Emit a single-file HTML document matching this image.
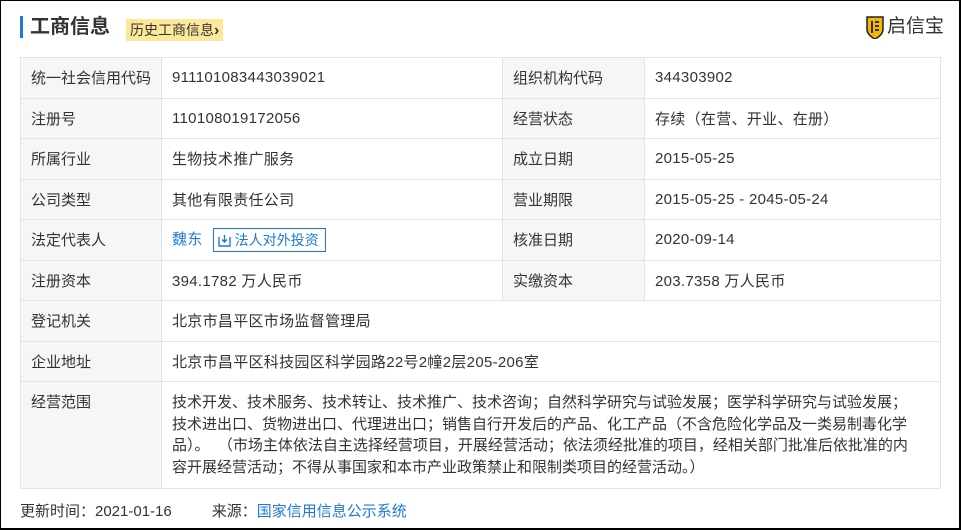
<!DOCTYPE html>
<html><head><meta charset="utf-8"><style>
*{margin:0;padding:0;box-sizing:border-box}
html,body{width:961px;height:530px;overflow:hidden;background:#fff}
body{font-family:"Liberation Sans","Noto Sans CJK SC",sans-serif;color:#333;font-size:15px;position:relative;border:1px solid #000;border-right:2px solid #000;border-bottom:2px solid #000}
.bar{position:absolute;left:19px;top:15px;width:3px;height:22px;background:#1e7ad9}
.title{position:absolute;left:29px;top:11px;font-size:20px;font-weight:bold;color:#333;line-height:30px}
.hist{position:absolute;left:125px;top:18px;height:22px;line-height:22px;padding:0 4px;background:#fde79a;color:#333;font-size:14px}
.logo{position:absolute;left:864px;top:12px;font-size:19px;color:#333;line-height:28px;display:flex;align-items:center;gap:2px}
table{position:absolute;left:19px;top:56px;width:921px;border-collapse:collapse}
td{border:1px solid #e4e4e4;padding:0 10px;height:40.5px;vertical-align:middle;font-size:15px;color:#333;letter-spacing:0.3px}
td.l{background:#f6f6f6;width:141px;letter-spacing:0}
td.v1{width:341px}
td.l2{width:142px}
.tall td{height:107px;vertical-align:top;padding-top:10px;line-height:21.6px;letter-spacing:0}
.tall td.sc{padding-right:26px}
a{color:#1e7ad9;text-decoration:none}
.btn{display:inline-block;border:1px solid #1e7ad9;color:#1e7ad9;height:24px;line-height:22px;padding:0 6px 0 4px;margin-left:10px;font-size:14px;vertical-align:middle;letter-spacing:0}
.foot{position:absolute;left:19px;top:499px;font-size:15px;color:#333}
</style></head><body>
<div class="bar"></div>
<div class="title">工商信息</div>
<div class="hist">历史工商信息<b style="font-size:16px">›</b></div>
<div class="logo"><svg width="20" height="24" viewBox="0 0 20 24"><path d="M2 2h16v12c0 5-4 8-8 10C6 22 2 19 2 14z" fill="#f2b705" stroke="#222" stroke-width="1.5"/><path d="M7 6v12M10 7h4M10 11h4M10 15h4" stroke="#222" stroke-width="1.8"/></svg>启信宝</div>
<table>
<tr><td class="l">统一社会信用代码</td><td class="v1">911101083443039021</td><td class="l l2">组织机构代码</td><td>344303902</td></tr>
<tr><td class="l">注册号</td><td>110108019172056</td><td class="l">经营状态</td><td>存续（在营、开业、在册）</td></tr>
<tr><td class="l">所属行业</td><td>生物技术推广服务</td><td class="l">成立日期</td><td>2015-05-25</td></tr>
<tr><td class="l">公司类型</td><td>其他有限责任公司</td><td class="l">营业期限</td><td>2015-05-25 - 2045-05-24</td></tr>
<tr><td class="l">法定代表人</td><td><a>魏东</a><span class="btn"><svg width="13" height="13" viewBox="0 0 13 13" style="vertical-align:-2px;margin-right:4px"><path d="M1 3v9h11V3M6.5 1v7M4 5.5l2.5 2.5 2.5-2.5" fill="none" stroke="#1e7ad9" stroke-width="1.4"/></svg>法人对外投资</span></td><td class="l">核准日期</td><td>2020-09-14</td></tr>
<tr><td class="l">注册资本</td><td>394.1782 万人民币</td><td class="l">实缴资本</td><td>203.7358 万人民币</td></tr>
<tr><td class="l">登记机关</td><td colspan="3">北京市昌平区市场监督管理局</td></tr>
<tr><td class="l">企业地址</td><td colspan="3">北京市昌平区科技园区科学园路22号2幢2层205-206室</td></tr>
<tr class="tall"><td class="l">经营范围</td><td class="sc" colspan="3">技术开发、技术服务、技术转让、技术推广、技术咨询；自然科学研究与试验发展；医学科学研究与试验发展；<br>技术进出口、货物进出口、代理进出口；销售自行开发后的产品、化工产品（不含危险化学品及一类易制毒化学<br>品）。&nbsp;&nbsp;（市场主体依法自主选择经营项目，开展经营活动；依法须经批准的项目，经相关部门批准后依批准的内<br>容开展经营活动；不得从事国家和本市产业政策禁止和限制类项目的经营活动。）</td></tr>
</table>
<div class="foot">更新时间：2021-01-16<span style="margin-left:40px">来源：</span><a>国家信用信息公示系统</a></div>
</body></html>
